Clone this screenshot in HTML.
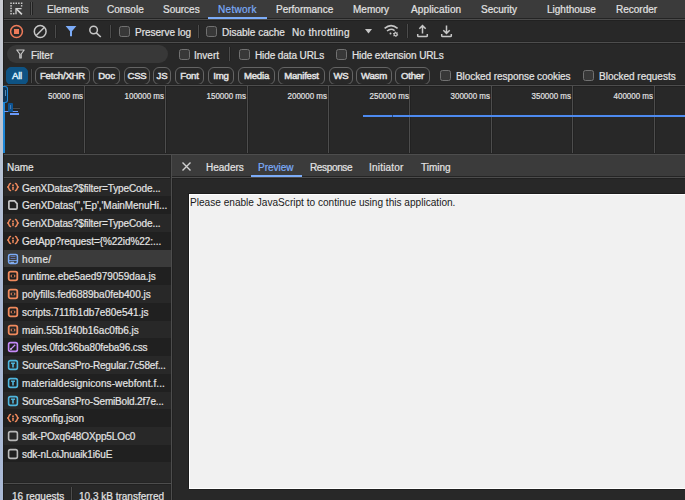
<!DOCTYPE html>
<html><head><meta charset="utf-8">
<style>
*{margin:0;padding:0;box-sizing:border-box}
html,body{width:685px;height:500px;overflow:hidden;background:#282828}
body{position:relative;font-family:"Liberation Sans",sans-serif;font-size:10px;color:#e3e3e3;-webkit-text-stroke-width:0.2px}
.a{position:absolute;white-space:nowrap;line-height:10px}
.bg{position:absolute}
.hl{position:absolute;height:1px;background:#4d4d4d;box-shadow:0 1px 0 #212121,0 -1px 0 #242424}
.vl{position:absolute;width:1px;background:#4d4d4d;box-shadow:1px 0 0 #222,-1px 0 0 #242424}
.cb{position:absolute;width:11px;height:11px;border:1.6px solid #717171;border-radius:2.5px;background:#383838}
.chip{-webkit-text-stroke-width:0.45px;position:absolute;top:67px;height:18px;border:1px solid #646464;border-radius:6px;color:#e3e3e3;line-height:16px;text-align:center;font-size:9.6px;letter-spacing:-0.2px}
.lbl{position:absolute;top:91px;font-size:9.4px;line-height:10px;text-align:right;color:#e3e3e3;white-space:nowrap;transform:scaleX(0.85);transform-origin:100% 50%}
.row{position:absolute;left:3px;width:168px;height:18px}
.rt{position:absolute;left:22px;white-space:nowrap;line-height:10px}
.ic{position:absolute;left:7px}
</style></head><body>
<!-- left strip -->
<div class="bg" style="left:0;top:0;width:3px;height:500px;background:linear-gradient(#caccd2,#b9c3d3 150px,#a9b8d4 300px,#abbad6)"></div>
<!-- tab bar -->
<div class="bg" style="left:3px;top:0;width:682px;height:19px;background:#3b3b3b"></div>
<div class="hl" style="left:3px;top:19px;width:682px;background:#4c4c4c"></div>
<svg class="bg" style="left:9px;top:1px" width="15" height="16" viewBox="0 0 15 16">
 <g fill="#cfcfcf"><rect x="1.3" y="1.5" width="1.5" height="1.5"/><rect x="3.9" y="1.5" width="1.5" height="1.5"/><rect x="6.5" y="1.5" width="1.5" height="1.5"/><rect x="9.1" y="1.5" width="1.5" height="1.5"/><rect x="11.9" y="1.5" width="1.5" height="1.5"/><rect x="11.9" y="4.1" width="1.4" height="1.4"/>
 <rect x="1.3" y="4.1" width="1.5" height="1.5"/><rect x="1.3" y="6.7" width="1.5" height="1.5"/><rect x="1.3" y="9.3" width="1.5" height="1.5"/><rect x="1.3" y="11.9" width="1.5" height="1.5"/><rect x="3.9" y="11.9" width="1.5" height="1.5"/></g>
 <path d="M7.4 8 L12.9 13.4" stroke="#d8d8d8" stroke-width="1.7" fill="none"/>
 <path d="M12.6 7.6 L7 7.6 L7 13.2" stroke="#d0d0d0" stroke-width="1.3" fill="none"/>
</svg>
<div class="vl" style="left:31px;top:2px;height:13px;background:#555"></div>
<div class="a" style="left:47px;top:5px">Elements</div>
<div class="a" style="left:107px;top:5px">Console</div>
<div class="a" style="left:163px;top:5px">Sources</div>
<div class="a" style="left:218px;top:5px;color:#7cacf8;letter-spacing:0.3px">Network</div>
<div class="bg" style="left:208px;top:17px;width:59px;height:2px;background:#7cacf8"></div>
<div class="a" style="left:276px;top:5px">Performance</div>
<div class="a" style="left:353px;top:5px">Memory</div>
<div class="a" style="left:411px;top:5px;letter-spacing:0.12px">Application</div>
<div class="a" style="left:481px;top:5px">Security</div>
<div class="a" style="left:547px;top:5px">Lighthouse</div>
<div class="a" style="left:616px;top:5px">Recorder</div>

<!-- toolbar -->
<div class="hl" style="left:3px;top:42px;width:682px"></div>
<svg class="bg" style="left:9px;top:24px" width="15" height="15" viewBox="0 0 15 15">
 <circle cx="7.5" cy="7.5" r="5.9" stroke="#ee7b5a" stroke-width="1.5" fill="none"/>
 <rect x="5" y="5" width="5" height="5" fill="#ee7b5a"/>
</svg>
<svg class="bg" style="left:33px;top:24px" width="15" height="15" viewBox="0 0 15 15">
 <circle cx="7.2" cy="7.5" r="5.9" stroke="#c7c7c7" stroke-width="1.5" fill="none"/>
 <path d="M3.2 11.5 L11.2 3.5" stroke="#c7c7c7" stroke-width="1.5"/>
</svg>
<div class="vl" style="left:55px;top:25px;height:13px;background:#4c4c4c"></div>
<svg class="bg" style="left:65px;top:25px" width="12" height="12" viewBox="0 0 12 12">
 <path d="M0.6 1 L11.4 1 L7 6.2 L7 11.2 L5 11.2 L5 6.2 Z" fill="#7cacf8"/>
</svg>
<svg class="bg" style="left:87px;top:24px" width="15" height="14" viewBox="0 0 15 14">
 <circle cx="6.6" cy="6" r="3.8" stroke="#c7c7c7" stroke-width="1.5" fill="none"/>
 <path d="M9.3 8.8 L13.8 13" stroke="#c7c7c7" stroke-width="1.6"/>
</svg>
<div class="vl" style="left:110px;top:25px;height:13px;background:#4c4c4c"></div>
<div class="cb" style="left:119px;top:26px"></div>
<div class="a" style="left:135px;top:28px">Preserve log</div>
<div class="vl" style="left:198px;top:25px;height:13px;background:#4c4c4c"></div>
<div class="cb" style="left:206px;top:26px"></div>
<div class="a" style="left:222px;top:28px">Disable cache</div>
<div class="a" style="left:292px;top:28px;letter-spacing:0.3px">No throttling</div>
<svg class="bg" style="left:365px;top:29px" width="7" height="5" viewBox="0 0 7 5"><path d="M0 0 L7 0 L3.5 4.5Z" fill="#c7c7c7"/></svg>
<svg class="bg" style="left:383px;top:24px" width="17" height="14" viewBox="0 0 17 14">
 <path d="M1.6 4.4 Q8 -1.2 14.6 4.4" stroke="#c7c7c7" stroke-width="1.5" fill="none"/>
 <path d="M4 7 Q8 3.8 11.6 6.6" stroke="#c7c7c7" stroke-width="1.5" fill="none"/>
 <circle cx="7.5" cy="9.6" r="1" fill="#c7c7c7"/>
 <path d="M14.60 10.30 L15.27 10.72 L14.94 11.65 L14.15 11.56 L13.60 12.03 L13.57 12.82 L12.60 13.00 L12.29 12.28 L11.60 12.03 L10.90 12.40 L10.26 11.65 L10.73 11.02 L10.60 10.30 L9.93 9.88 L10.26 8.95 L11.05 9.04 L11.60 8.57 L11.63 7.78 L12.60 7.60 L12.91 8.32 L13.60 8.57 L14.30 8.20 L14.94 8.95 L14.47 9.58 Z M11.70 10.30 a0.9 0.9 0 1 0 1.8 0 a0.9 0.9 0 1 0 -1.8 0 Z" fill="#c7c7c7" fill-rule="evenodd"/>
</svg>
<div class="vl" style="left:407px;top:24px;height:14px;background:#4c4c4c"></div>
<svg class="bg" style="left:416px;top:24px" width="13" height="14" viewBox="0 0 13 14">
 <path d="M6.5 9.6 L6.5 1.8 M3.3 4.8 L6.5 1.6 L9.7 4.8" stroke="#c7c7c7" stroke-width="1.5" fill="none"/>
 <path d="M1.7 9.9 L1.7 11.7 Q1.7 12.6 2.6 12.6 L10.4 12.6 Q11.3 12.6 11.3 11.7 L11.3 9.9" stroke="#c7c7c7" stroke-width="1.5" fill="none"/>
</svg>
<svg class="bg" style="left:440px;top:24px" width="13" height="14" viewBox="0 0 13 14">
 <path d="M6.5 1.4 L6.5 9.2 M3.3 6.2 L6.5 9.4 L9.7 6.2" stroke="#c7c7c7" stroke-width="1.5" fill="none"/>
 <path d="M1.7 9.9 L1.7 11.7 Q1.7 12.6 2.6 12.6 L10.4 12.6 Q11.3 12.6 11.3 11.7 L11.3 9.9" stroke="#c7c7c7" stroke-width="1.5" fill="none"/>
</svg>

<!-- filter row -->
<div class="bg" style="left:7px;top:45px;width:161px;height:18px;border-radius:9px;background:#383838"></div>
<svg class="bg" style="left:16px;top:49px" width="9" height="10" viewBox="0 0 9 10">
 <path d="M0.8 1 L8.2 1 L5.2 5 L5.2 9 L3.8 9 L3.8 5 Z" stroke="#c7c7c7" stroke-width="1.2" fill="none" stroke-linejoin="round"/>
</svg>
<div class="a" style="left:31px;top:51px">Filter</div>
<div class="cb" style="left:179px;top:49px"></div>
<div class="a" style="left:194px;top:51px">Invert</div>
<div class="vl" style="left:229px;top:47px;height:14px;background:#4c4c4c"></div>
<div class="cb" style="left:239px;top:49px"></div>
<div class="a" style="left:255px;top:51px;letter-spacing:-0.1px">Hide data URLs</div>
<div class="cb" style="left:336px;top:49px"></div>
<div class="a" style="left:352px;top:51px;letter-spacing:-0.12px">Hide extension URLs</div>

<!-- chips row -->
<div class="chip" style="left:6px;width:22px;background:#0e5384;border-color:#0e5384;color:#dbeefc;border-radius:5px">All</div>
<div class="vl" style="left:31px;top:69px;height:14px;background:#4c4c4c"></div>
<div class="chip" style="left:35px;width:55px">Fetch/XHR</div>
<div class="chip" style="left:93px;width:27px">Doc</div>
<div class="chip" style="left:124px;width:26px">CSS</div>
<div class="chip" style="left:153px;width:18px">JS</div>
<div class="chip" style="left:175px;width:29px">Font</div>
<div class="chip" style="left:208px;width:26px">Img</div>
<div class="chip" style="left:238px;width:37px">Media</div>
<div class="chip" style="left:278px;width:47px">Manifest</div>
<div class="chip" style="left:329px;width:24px">WS</div>
<div class="chip" style="left:356px;width:36px">Wasm</div>
<div class="chip" style="left:395px;width:35px">Other</div>
<div class="cb" style="left:440px;top:70px"></div>
<div class="a" style="left:456px;top:72px;letter-spacing:-0.07px">Blocked response cookies</div>
<div class="cb" style="left:583px;top:70px"></div>
<div class="a" style="left:599px;top:72px">Blocked requests</div>

<!-- timeline overview -->
<div class="hl" style="left:3px;top:85px;width:682px"></div>
<div class="vl" style="left:84px;top:86px;height:68px;background:#4d4d4d"></div>
<div class="vl" style="left:165px;top:86px;height:68px;background:#4d4d4d"></div>
<div class="vl" style="left:247px;top:86px;height:68px;background:#4d4d4d"></div>
<div class="vl" style="left:328px;top:86px;height:68px;background:#4d4d4d"></div>
<div class="vl" style="left:409px;top:86px;height:68px;background:#4d4d4d"></div>
<div class="vl" style="left:491px;top:86px;height:68px;background:#4d4d4d"></div>
<div class="vl" style="left:572px;top:86px;height:68px;background:#4d4d4d"></div>
<div class="vl" style="left:654px;top:86px;height:68px;background:#4d4d4d"></div>
<div class="lbl" style="left:33.1px;width:50px">50000 ms</div>
<div class="lbl" style="left:114.4px;width:50px">100000 ms</div>
<div class="lbl" style="left:195.8px;width:50px">150000 ms</div>
<div class="lbl" style="left:277.2px;width:50px">200000 ms</div>
<div class="lbl" style="left:358.6px;width:50px">250000 ms</div>
<div class="lbl" style="left:440.0px;width:50px">300000 ms</div>
<div class="lbl" style="left:521.3px;width:50px">350000 ms</div>
<div class="lbl" style="left:602.7px;width:50px">400000 ms</div>
<div class="bg" style="left:363px;top:115px;width:322px;height:2px;background:#4d8af0"></div>
<div class="bg" style="left:392px;top:115px;width:1px;height:2px;background:#2a4a7a"></div>
<div class="bg" style="left:3px;top:86px;width:2px;height:68px;background:#1d86d6"></div>
<div class="bg" style="left:3px;top:86px;width:4.5px;height:16.5px;border:1.2px solid #1d86d6;border-left:none;border-radius:0 3px 3px 0;background:#0f3556"></div>
<div class="bg" style="left:5px;top:90px;width:1px;height:6px;background:#5a8ab0"></div>
<div class="hl" style="left:12px;top:108px;width:8px;background:#4a4a4a"></div>
<div class="bg" style="left:4px;top:110.5px;width:14px;height:1.3px;background:#6a9af8"></div>
<div class="bg" style="left:8px;top:103px;width:4.5px;height:8.5px;background:#0c5494;border-radius:1px"></div>
<div class="bg" style="left:10px;top:105px;width:0.8px;height:4px;background:#4a7ab0"></div>
<div class="bg" style="left:10px;top:113px;width:8.5px;height:2px;background:#6a9af8"></div>
<div class="hl" style="left:3px;top:154px;width:682px"></div>

<!-- name header -->
<div class="bg" style="left:3px;top:155px;width:168px;height:22px;background:#282828"></div>
<div class="a" style="left:7px;top:163px">Name</div>
<div class="hl" style="left:3px;top:177px;width:168px"></div>
<div class="vl" style="left:171px;top:155px;height:345px"></div>
<!-- right tab bar -->
<div class="bg" style="left:172px;top:155px;width:513px;height:22px;background:#3b3b3b"></div>
<div class="hl" style="left:172px;top:177px;width:513px;background:#4c4c4c"></div>
<svg class="bg" style="left:181px;top:161px" width="11" height="11" viewBox="0 0 11 11"><path d="M1.5 1.5 L9.5 9.5 M9.5 1.5 L1.5 9.5" stroke="#d0d0d0" stroke-width="1.4"/></svg>
<div class="a" style="left:206px;top:163px">Headers</div>
<div class="a" style="left:258px;top:163px;color:#7cacf8">Preview</div>
<div class="bg" style="left:251px;top:175px;width:51px;height:2px;background:#7cacf8"></div>
<div class="a" style="left:310px;top:163px;letter-spacing:-0.35px">Response</div>
<div class="a" style="left:369px;top:163px;letter-spacing:0.2px">Initiator</div>
<div class="a" style="left:421px;top:163px">Timing</div>

<!-- preview -->
<div class="bg" style="left:189px;top:194px;width:496px;height:295px;background:#f1f1f1;border:1px solid #fff;border-right:none;box-shadow:-1px -1px 0 #1c1c1c,0 1px 0 #1f1f1f"></div>
<div class="a" style="left:190px;top:198px;color:#1a1a1a;font-size:10.1px;-webkit-text-stroke-width:0">Please enable JavaScript to continue using this application.</div>

<!-- request rows -->
<div id="rows">
<div class="row" style="top:178.50px;height:17.75px;background:#282828">
<div class="ic" style="left:3px;top:2.5px"><svg width="14" height="12" viewBox="0 0 14 12"><g stroke="#f08a5d" stroke-width="1.5" fill="none" stroke-linecap="round" stroke-linejoin="round"><path d="M4.5 2.4 Q3.3 2.6 3 4.1 Q2.7 5.6 1.7 6 Q2.7 6.4 3 7.9 Q3.3 9.4 4.5 9.6"/><path d="M9.5 2.4 Q10.7 2.6 11 4.1 Q11.3 5.6 12.3 6 Q11.3 6.4 11 7.9 Q10.7 9.4 9.5 9.6"/><path d="M7 6.2 L7 8.4"/></g><circle cx="7" cy="4.2" r="0.95" fill="#f08a5d"/></svg></div>
<div class="rt" style="left:19px;top:5px;letter-spacing:-0.103px">GenXDatas?$filter=TypeCode...</div></div>
<div class="row" style="top:196.25px;height:17.75px;background:#202020">
<div class="ic" style="left:4px;top:3px"><svg width="12" height="12" viewBox="0 0 12 12"><path d="M3 1.9 L7.6 1.9 L10.1 4.6 L10.1 9 Q10.1 10.1 9 10.1 L3 10.1 Q1.9 10.1 1.9 9 L1.9 3 Q1.9 1.9 3 1.9 Z" stroke="#c4c4c4" stroke-width="1.7" fill="none" stroke-linejoin="round"/></svg></div>
<div class="rt" style="left:19px;top:5px;letter-spacing:-0.053px">GenXDatas(&#39;&#39;,&#39;Ep&#39;,&#39;MainMenuHi...</div></div>
<div class="row" style="top:214.00px;height:17.75px;background:#282828">
<div class="ic" style="left:3px;top:2.5px"><svg width="14" height="12" viewBox="0 0 14 12"><g stroke="#f08a5d" stroke-width="1.5" fill="none" stroke-linecap="round" stroke-linejoin="round"><path d="M4.5 2.4 Q3.3 2.6 3 4.1 Q2.7 5.6 1.7 6 Q2.7 6.4 3 7.9 Q3.3 9.4 4.5 9.6"/><path d="M9.5 2.4 Q10.7 2.6 11 4.1 Q11.3 5.6 12.3 6 Q11.3 6.4 11 7.9 Q10.7 9.4 9.5 9.6"/><path d="M7 6.2 L7 8.4"/></g><circle cx="7" cy="4.2" r="0.95" fill="#f08a5d"/></svg></div>
<div class="rt" style="left:19px;top:5px;letter-spacing:-0.103px">GenXDatas?$filter=TypeCode...</div></div>
<div class="row" style="top:231.75px;height:17.75px;background:#202020">
<div class="ic" style="left:3px;top:2.5px"><svg width="14" height="12" viewBox="0 0 14 12"><g stroke="#f08a5d" stroke-width="1.5" fill="none" stroke-linecap="round" stroke-linejoin="round"><path d="M4.5 2.4 Q3.3 2.6 3 4.1 Q2.7 5.6 1.7 6 Q2.7 6.4 3 7.9 Q3.3 9.4 4.5 9.6"/><path d="M9.5 2.4 Q10.7 2.6 11 4.1 Q11.3 5.6 12.3 6 Q11.3 6.4 11 7.9 Q10.7 9.4 9.5 9.6"/><path d="M7 6.2 L7 8.4"/></g><circle cx="7" cy="4.2" r="0.95" fill="#f08a5d"/></svg></div>
<div class="rt" style="left:19px;top:5px;letter-spacing:-0.061px">GetApp?request={%22id%22:...</div></div>
<div class="row" style="top:249.50px;height:17.75px;background:#3b3b3b">
<div class="ic" style="left:4px;top:3px"><svg width="12" height="12" viewBox="0 0 12 12"><rect x="1.6" y="1.6" width="8.8" height="8.8" rx="1.6" stroke="#7cacf8" stroke-width="1.5" fill="none"/><path d="M3.5 3.5 L8.5 3.5 M3.5 5.5 L8.5 5.5" stroke="#6a7fc8" stroke-width="0.8"/><path d="M2 7.6 L10 7.6" stroke="#7cacf8" stroke-width="0.9"/><path d="M3.4 9.3 L7 9.3" stroke="#9cc4ff" stroke-width="1"/></svg></div>
<div class="rt" style="left:19px;top:5px;letter-spacing:0.340px">home/</div></div>
<div class="row" style="top:267.25px;height:17.75px;background:#202020">
<div class="ic" style="left:4px;top:3px"><svg width="12" height="12" viewBox="0 0 12 12"><rect x="1.7" y="1.7" width="8.6" height="8.6" rx="1.8" stroke="#f08a5d" stroke-width="1.8" fill="none"/><path d="M4.9 4.6 L3.9 6 L4.9 7.4 M7.1 4.6 L8.1 6 L7.1 7.4" stroke="#f08a5d" stroke-width="1" fill="none"/></svg></div>
<div class="rt" style="left:19px;top:5px;letter-spacing:-0.056px">runtime.ebe5aed979059daa.js</div></div>
<div class="row" style="top:285.00px;height:17.75px;background:#282828">
<div class="ic" style="left:4px;top:3px"><svg width="12" height="12" viewBox="0 0 12 12"><rect x="1.7" y="1.7" width="8.6" height="8.6" rx="1.8" stroke="#f08a5d" stroke-width="1.8" fill="none"/><path d="M4.9 4.6 L3.9 6 L4.9 7.4 M7.1 4.6 L8.1 6 L7.1 7.4" stroke="#f08a5d" stroke-width="1" fill="none"/></svg></div>
<div class="rt" style="left:19px;top:5px;letter-spacing:-0.010px">polyfills.fed6889ba0feb400.js</div></div>
<div class="row" style="top:302.75px;height:17.75px;background:#202020">
<div class="ic" style="left:4px;top:3px"><svg width="12" height="12" viewBox="0 0 12 12"><rect x="1.7" y="1.7" width="8.6" height="8.6" rx="1.8" stroke="#f08a5d" stroke-width="1.8" fill="none"/><path d="M4.9 4.6 L3.9 6 L4.9 7.4 M7.1 4.6 L8.1 6 L7.1 7.4" stroke="#f08a5d" stroke-width="1" fill="none"/></svg></div>
<div class="rt" style="left:19px;top:5px;letter-spacing:-0.026px">scripts.711fb1db7e80e541.js</div></div>
<div class="row" style="top:320.50px;height:17.75px;background:#282828">
<div class="ic" style="left:4px;top:3px"><svg width="12" height="12" viewBox="0 0 12 12"><rect x="1.7" y="1.7" width="8.6" height="8.6" rx="1.8" stroke="#f08a5d" stroke-width="1.8" fill="none"/><path d="M4.9 4.6 L3.9 6 L4.9 7.4 M7.1 4.6 L8.1 6 L7.1 7.4" stroke="#f08a5d" stroke-width="1" fill="none"/></svg></div>
<div class="rt" style="left:19px;top:5px;letter-spacing:-0.029px">main.55b1f40b16ac0fb6.js</div></div>
<div class="row" style="top:338.25px;height:17.75px;background:#202020">
<div class="ic" style="left:4px;top:3px"><svg width="12" height="12" viewBox="0 0 12 12"><rect x="1.6" y="1.6" width="8.8" height="8.8" rx="1.8" stroke="#c58af9" stroke-width="1.6" fill="none"/><path d="M3.6 8.4 L8.2 3.8" stroke="#c58af9" stroke-width="1.3"/><circle cx="3.9" cy="8.1" r="0.8" fill="#eedcff"/></svg></div>
<div class="rt" style="left:19px;top:5px;letter-spacing:-0.133px">styles.0fdc36ba80feba96.css</div></div>
<div class="row" style="top:356.00px;height:17.75px;background:#282828">
<div class="ic" style="left:4px;top:3px"><svg width="12" height="12" viewBox="0 0 12 12"><rect x="1.6" y="1.6" width="8.8" height="8.8" rx="1.8" stroke="#4fb6de" stroke-width="1.6" fill="none"/><path d="M4 4.2 L8 4.2" stroke="#4fb6de" stroke-width="1.4"/><path d="M6 4 L6 8.6" stroke="#4fb6de" stroke-width="1.6"/></svg></div>
<div class="rt" style="left:19px;top:5px;letter-spacing:-0.174px">SourceSansPro-Regular.7c58ef...</div></div>
<div class="row" style="top:373.75px;height:17.75px;background:#202020">
<div class="ic" style="left:4px;top:3px"><svg width="12" height="12" viewBox="0 0 12 12"><rect x="1.6" y="1.6" width="8.8" height="8.8" rx="1.8" stroke="#4fb6de" stroke-width="1.6" fill="none"/><path d="M4 4.2 L8 4.2" stroke="#4fb6de" stroke-width="1.4"/><path d="M6 4 L6 8.6" stroke="#4fb6de" stroke-width="1.6"/></svg></div>
<div class="rt" style="left:19px;top:5px;letter-spacing:0.069px">materialdesignicons-webfont.f...</div></div>
<div class="row" style="top:391.50px;height:17.75px;background:#282828">
<div class="ic" style="left:4px;top:3px"><svg width="12" height="12" viewBox="0 0 12 12"><rect x="1.6" y="1.6" width="8.8" height="8.8" rx="1.8" stroke="#4fb6de" stroke-width="1.6" fill="none"/><path d="M4 4.2 L8 4.2" stroke="#4fb6de" stroke-width="1.4"/><path d="M6 4 L6 8.6" stroke="#4fb6de" stroke-width="1.6"/></svg></div>
<div class="rt" style="left:19px;top:5px;letter-spacing:-0.170px">SourceSansPro-SemiBold.2f7e...</div></div>
<div class="row" style="top:409.25px;height:17.75px;background:#202020">
<div class="ic" style="left:3px;top:2.5px"><svg width="14" height="12" viewBox="0 0 14 12"><g stroke="#f08a5d" stroke-width="1.5" fill="none" stroke-linecap="round" stroke-linejoin="round"><path d="M4.5 2.4 Q3.3 2.6 3 4.1 Q2.7 5.6 1.7 6 Q2.7 6.4 3 7.9 Q3.3 9.4 4.5 9.6"/><path d="M9.5 2.4 Q10.7 2.6 11 4.1 Q11.3 5.6 12.3 6 Q11.3 6.4 11 7.9 Q10.7 9.4 9.5 9.6"/><path d="M7 6.2 L7 8.4"/></g><circle cx="7" cy="4.2" r="0.95" fill="#f08a5d"/></svg></div>
<div class="rt" style="left:19px;top:5px;letter-spacing:-0.050px">sysconfig.json</div></div>
<div class="row" style="top:427.00px;height:17.75px;background:#282828">
<div class="ic" style="left:4px;top:3px"><svg width="12" height="12" viewBox="0 0 12 12"><rect x="1.6" y="1.6" width="8.8" height="8.8" rx="1.8" stroke="#b8b8b8" stroke-width="1.6" fill="none"/></svg></div>
<div class="rt" style="left:19px;top:5px;letter-spacing:-0.120px">sdk-POxq648OXpp5LOc0</div></div>
<div class="row" style="top:444.75px;height:17.75px;background:#202020">
<div class="ic" style="left:4px;top:3px"><svg width="12" height="12" viewBox="0 0 12 12"><rect x="1.6" y="1.6" width="8.8" height="8.8" rx="1.8" stroke="#b8b8b8" stroke-width="1.6" fill="none"/></svg></div>
<div class="rt" style="left:19px;top:5px;letter-spacing:-0.105px">sdk-nLoiJnuaik1i6uE</div></div>
</div><!--/rows-->
<div class="bg" style="left:3px;top:462px;width:168px;height:21px;background:#282828"></div>
<div class="hl" style="left:3px;top:483px;width:168px"></div>
<div class="a" style="left:12px;top:492px">16 requests</div>
<div class="vl" style="left:71px;top:487px;height:13px;background:#4c4c4c"></div>
<div class="a" style="left:79px;top:492px">10.3 kB transferred</div>
<div class="bg" style="left:3px;top:0;width:1px;height:86px;background:#1c1c1c;opacity:0.8"></div>
<div class="bg" style="left:3px;top:154px;width:1px;height:346px;background:#1c1c1c;opacity:0.8"></div>
</body></html>
